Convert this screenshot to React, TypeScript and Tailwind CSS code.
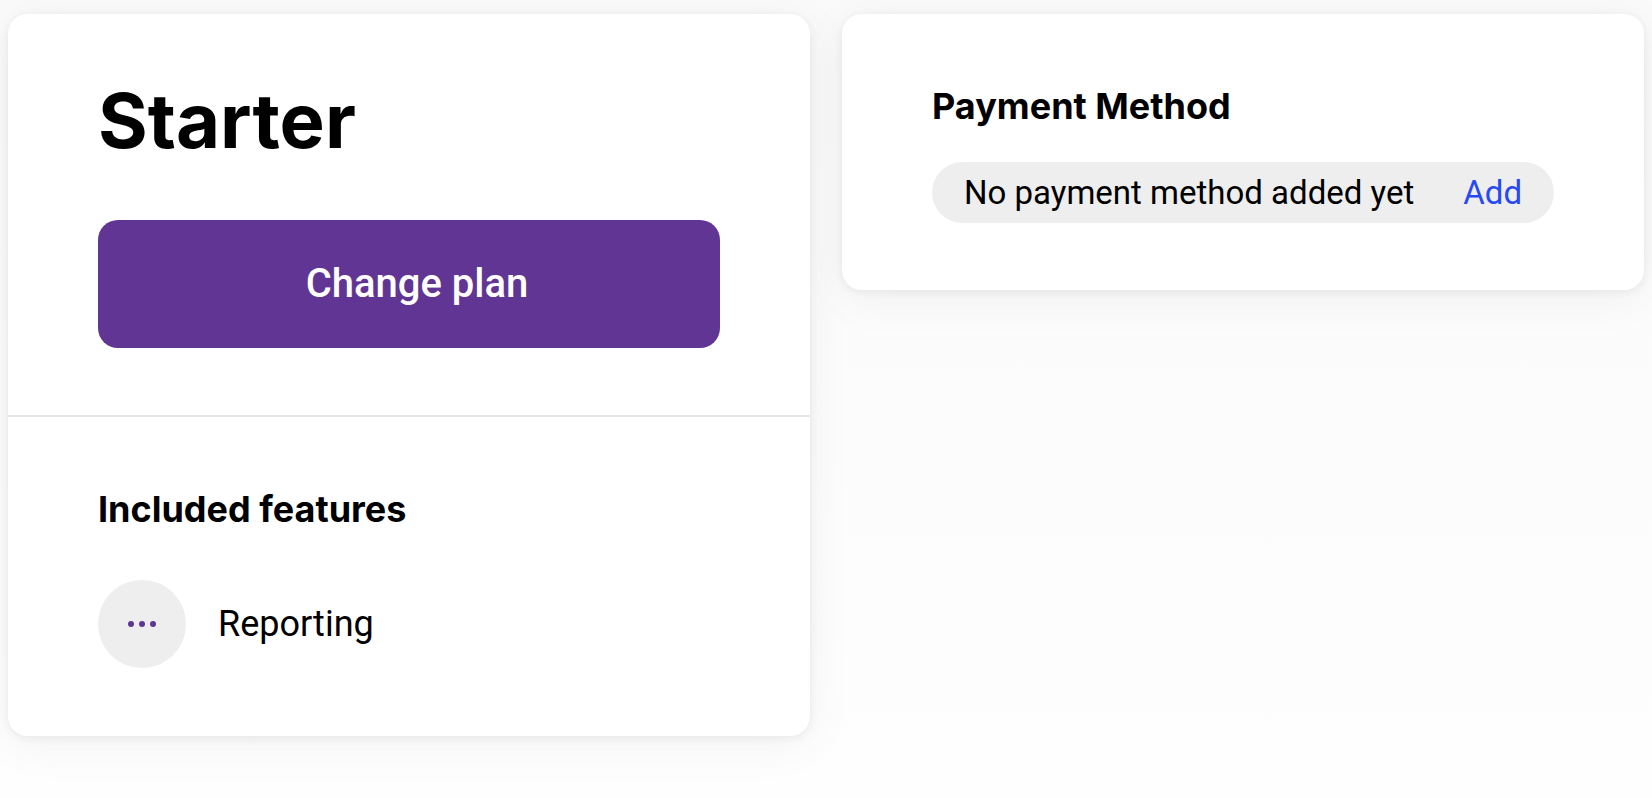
import type { ReactNode } from "react";

const features = ["Reporting"];

function Card({ children }: { children: ReactNode }) {
  return (
    <section className="rounded-[20px] bg-white shadow-[0_2px_8px_rgba(40,50,70,0.08),0_8px_50px_rgba(0,0,0,0.05)]">
      {children}
    </section>
  );
}

function SectionTitle({ children }: { children: ReactNode }) {
  return (
    <h2 className="font-['Inter',sans-serif] text-[36px] leading-[50px] font-bold">
      {children}
    </h2>
  );
}

function DotsIcon() {
  return (
    <svg width="36" height="36" viewBox="0 0 36 36" fill="currentColor" aria-hidden="true">
      <circle cx="7" cy="18" r="3" />
      <circle cx="18" cy="18" r="3" />
      <circle cx="29" cy="18" r="3" />
    </svg>
  );
}

export default function App() {
  return (
    <main className="grid min-h-screen grid-cols-2 items-start gap-8 bg-linear-to-b from-[#fafafa] to-[#fefefe] px-2 pt-3.5 pb-8 font-['Roboto',sans-serif] font-[450] text-black">
      <Card>
        <div className="border-b-2 border-[#e5e5e5] px-[90px] py-[67px]">
          <h1 className="font-['Inter',sans-serif] text-[76px] leading-[78px] font-bold">Starter</h1>
          <button
            type="button"
            className="mt-[61px] h-32 w-full cursor-pointer rounded-[20px] bg-[#603594] pl-4 text-[40px] font-medium text-white hover:bg-[#532c82]"
          >
            Change plan
          </button>
        </div>
        <div className="px-[90px] pt-[67px] pb-[68px]">
          <SectionTitle>Included features</SectionTitle>
          <ul className="mt-[46px] flex flex-col gap-8">
            {features.map((feature) => (
              <li key={feature} className="flex items-center gap-8">
                <span className="flex size-[88px] shrink-0 items-center justify-center rounded-full bg-[#eeeeee] text-[#603594]">
                  <DotsIcon />
                </span>
                <span className="text-[36px] leading-[45px]">{feature}</span>
              </li>
            ))}
          </ul>
        </div>
      </Card>

      <Card>
        <div className="px-[90px] py-[67px]">
          <SectionTitle>Payment Method</SectionTitle>
          <div className="mt-[31px] flex items-center justify-between rounded-full bg-[#eeeeee] px-8 py-2 text-[33px] leading-[45px]">
            <span>No payment method added yet</span>
            <button type="button" className="cursor-pointer text-[#2749f5] hover:underline">
              Add
            </button>
          </div>
        </div>
      </Card>
    </main>
  );
}
